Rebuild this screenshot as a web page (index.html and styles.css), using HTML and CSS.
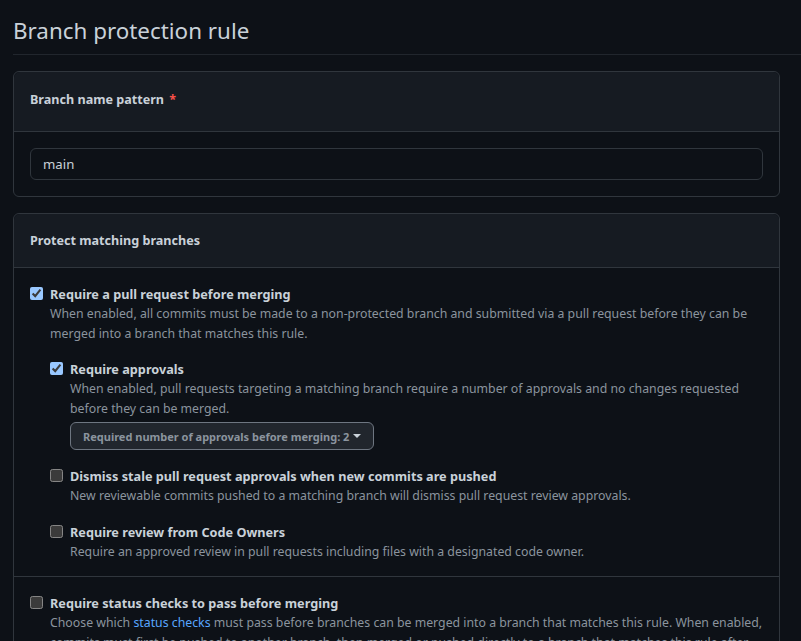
FILE: index.html
```html
<!DOCTYPE html>
<html lang="en">
<head>
<meta charset="utf-8">
<title>Branch protection rule</title>
<link rel="stylesheet" href="styles.css">
</head>
<body>
<div class="page">
  <h2 class="title">Branch protection rule</h2>

  <div class="box">
    <div class="box-header box-header-first">
      <span class="hdr">Branch name pattern</span> <span class="req">*</span>
    </div>
    <div class="box-body">
      <input class="text-input" type="text" value="main">
    </div>
  </div>

  <div class="box">
    <div class="box-header">
      <span class="hdr">Protect matching branches</span>
    </div>
    <div class="box-row">
      <div class="item">
        <input type="checkbox" class="cb" checked>
        <div class="item-text">
          <div class="label">Require a pull request before merging</div>
          <p class="note">When enabled, all commits must be made to a non-protected branch and submitted via a pull request before they can be merged into a branch that matches this rule.</p>
          <div class="sub item">
            <input type="checkbox" class="cb" checked>
            <div class="item-text">
              <div class="label">Require approvals</div>
              <p class="note">When enabled, pull requests targeting a matching branch require a number of approvals and no changes requested before they can be merged.</p>
              <button class="select-btn">Required number of approvals before merging: 2 <span class="caret"></span></button>
            </div>
          </div>
          <div class="sub item">
            <input type="checkbox" class="cb">
            <div class="item-text">
              <div class="label">Dismiss stale pull request approvals when new commits are pushed</div>
              <p class="note">New reviewable commits pushed to a matching branch will dismiss pull request review approvals.</p>
            </div>
          </div>
          <div class="sub item">
            <input type="checkbox" class="cb">
            <div class="item-text">
              <div class="label">Require review from Code Owners</div>
              <p class="note">Require an approved review in pull requests including files with a designated code owner.</p>
            </div>
          </div>
        </div>
      </div>
    </div>
    <div class="box-row">
      <div class="item">
        <input type="checkbox" class="cb">
        <div class="item-text">
          <div class="label">Require status checks to pass before merging</div>
          <p class="note">Choose which <a href="#">status checks</a> must pass before branches can be merged into a branch that matches this rule. When enabled, commits must first be pushed to another branch, then merged or pushed directly to a branch that matches this rule after status checks have passed.</p>
        </div>
      </div>
    </div>
  </div>
</div>
</body>
</html>
```

FILE: styles.css
```css
html, body {
  margin: 0;
  padding: 0;
  background: #0d1117;
  color: #c9d1d9;
  color-scheme: dark;
  font-family: "Noto Sans", "Open Sans", sans-serif;
  overflow: hidden;
}

.page {
  width: 767px;
  padding: 16px 0 0 13px;
}

.title {
  margin: 0;
  font-size: 22.4px;
  line-height: 30px;
  font-weight: 400;
  color: #c9d1d9;
  padding-bottom: 8px;
  border-bottom: 1px solid #21262d;
  margin-right: -21px;
}

.box {
  margin-top: 16px;
  border: 1px solid #30363d;
  border-radius: 6px;
  background: #0d1117;
}

.box-header {
  background: #161b22;
  border-bottom: 1px solid #30363d;
  border-radius: 6px 6px 0 0;
  padding: 16px;
  line-height: 21px;
  font-size: 12.6px;
}

.box-header-first {
  padding: 17px 16px 21px;
}

.hdr {
  font-weight: 700;
  color: #c9d1d9;
}

.req {
  color: #f85149;
  font-weight: 700;
  margin-left: 2px;
}

.box-body {
  padding: 16px;
}

.text-input {
  display: block;
  width: 100%;
  box-sizing: border-box;
  height: 32px;
  padding: 0 12px;
  background: #0d1117;
  border: 1px solid #30363d;
  border-radius: 6px;
  color: #c9d1d9;
  font-family: inherit;
  font-size: 13.2px;
  outline: none;
}

.box-row {
  padding: 16px 16px 14px;
}

.box-row + .box-row {
  border-top: 1px solid #30363d;
}

.item {
  display: flex;
  align-items: flex-start;
}

.cb {
  margin: 3px 7px 0 0;
  width: 13px;
  height: 13px;
  flex: none;
}

.item-text {
  flex: 1;
}

.label {
  font-size: 12.7px;
  font-weight: 700;
  line-height: 20px;
  color: #c9d1d9;
}

.note {
  margin: 0;
  font-size: 12.3px;
  line-height: 20px;
  color: #8b949e;
}

.note a {
  color: #58a6ff;
  text-decoration: none;
}

.sub {
  margin-top: 15px;
}

.sub + .sub {
  margin-top: 16px;
}

.select-btn {
  margin-top: 3px;
  display: inline-flex;
  align-items: center;
  height: 28px;
  padding: 0 12px;
  background: #21262d;
  border: 1px solid #6e7681;
  border-radius: 6px;
  color: #8b949e;
  font-family: inherit;
  font-size: 11px;
  font-weight: 700;
}

.caret {
  display: inline-block;
  width: 0;
  height: 0;
  margin-left: 4px;
  border-top: 4px solid #c9d1d9;
  border-left: 4px solid transparent;
  border-right: 4px solid transparent;
}
```
